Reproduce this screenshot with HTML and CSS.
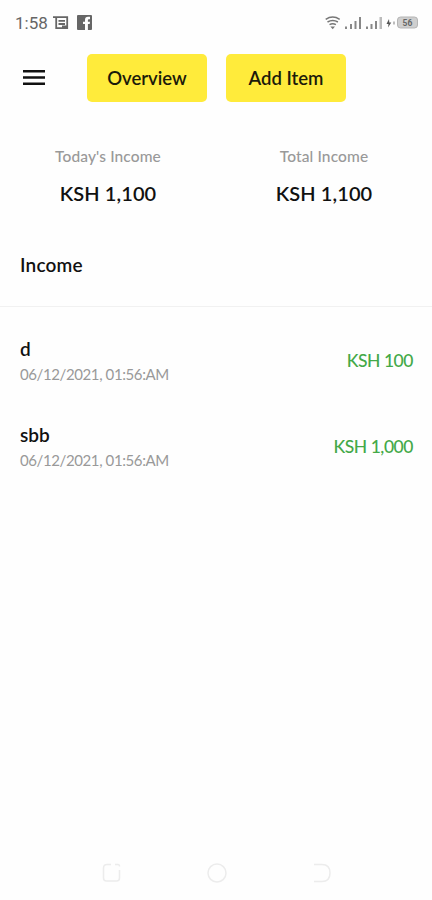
FILE: index.html
```html
<!DOCTYPE html>
<html lang="en">
<head>
<meta charset="utf-8">
<title>Income</title>
<link rel="stylesheet" href="styles.css">
</head>
<body>
<div class="status">
  <span class="clock">1:58</span>
  <svg class="note" width="16" height="14" viewBox="0 0 16 14" fill="none" stroke="#666" stroke-width="1.8"><path d="M0 1.2h14.2v11H3.2V1.2M5.5 4.8h6.5M5.5 8h6.5M9 10.3h4.5"/></svg>
  <svg class="fb" width="15" height="15" viewBox="0 0 15 15"><rect width="15" height="15" rx="1" fill="#666"/><path d="M8 15V9H6V6.700h2V5q0-3.200 3-3.200h2v2.400h-1.100q-1 0-1 .9v1.600H13L12.700 9h-1.800v6z" fill="#fff"/></svg>
  <svg class="signals" width="94" height="16" viewBox="0 0 94 16">
    <g fill="none" stroke="#777" stroke-width="1.5"><path d="M.7 4.3q7-4.6 14 0M2.5 7q5.2-3 10.4 0M4.5 9.6q3.2-1.8 6.4 0"/></g>
    <path d="M5.4 11.5h4.6l-2.3 2.7z" fill="#777"/>
    <g fill="#888"><path d="M20 11.5h2v2.5h-2zM25 9h2v5h-2zM29.500 6h2v8h-2zM34 2h2v12h-2z"/><path d="M41 11.500h2V14h-2zM45.500 9h2v5h-2z"/><path d="M50 6h2v8h-2z"/><path d="M54.500 2h2.500v12h-2.500z" fill="#bbb"/></g>
    <path d="M64 4l-2.500 5h2L63 12.500l3.300-5h-2z" fill="#555"/>
    <path d="M69 6.500v3" stroke="#999" stroke-width="1.300"/>
    <rect x="72.500" y="2" width="20" height="11" rx="3" fill="#cfcfcf" stroke="#b5b5b5"/>
    <text x="82.500" y="10.500" text-anchor="middle" class="charge">56</text>
  </svg>
</div>
<header class="bar">
  <svg class="menu" width="22" height="16" viewBox="0 0 22 16" fill="#111"><path d="M0 0h22v2.500H0zM0 6.200h22v2.500H0zM0 12.400h22v2.500H0z"/></svg>
  <button class="btn"><span class="overview">Overview</span></button>
  <button class="btn"><span class="add">Add Item</span></button>
</header>
<section class="totals">
  <div><p class="label">Today's Income</p><p class="sum">KSH 1,100</p></div>
  <div><p class="label">Total Income</p><p class="sum">KSH 1,100</p></div>
</section>
<h1 class="heading">Income</h1>
<main class="list">
  <div class="row"><div><p class="name">d</p><p class="date">06/12/2021, 01:56:AM</p></div><span class="amount">KSH 100</span></div>
  <div class="row"><div><p class="name">sbb</p><p class="date">06/12/2021, 01:56:AM</p></div><span class="amount">KSH 1,000</span></div>
</main>
<nav class="nav">
  <svg width="20" height="20" viewBox="0 0 20 20"><path d="M9 1.500H5Q1.500 1.500 1.500 5v10q0 3 3 3h10q3 0 3-3V7M13 1.500h3q1.500 0 1.500 2"/></svg>
  <svg width="20" height="20" viewBox="0 0 20 20"><circle cx="10" cy="10" r="9"/></svg>
  <svg width="20" height="20" viewBox="0 0 20 20"><path d="M2 1.500h8q8 0 8 8.500t-8 8.500H2"/></svg>
</nav>
</body>
</html>
```
FILE: styles.css
```css
* { box-sizing: border-box; }
body { margin: 0; height: 900px; background: #fefefe; color: #111; font-family: Lato, sans-serif; font-weight: 500; display: flex; flex-direction: column; overflow: hidden; }
p, h1 { margin: 0; white-space: nowrap; }
.status { height: 45px; padding: 0 13px 0 15px; display: flex; align-items: center; flex: none; }
.clock { font: 400 17px/20px Roboto, sans-serif; color: #666; width: 38px; }
.fb { margin-left: 8px; }
.signals { margin-left: auto; }
.charge { font: 700 8.500px Roboto, sans-serif; fill: #666; }
.bar { height: 65px; padding: 0 0 0 23px; display: flex; align-items: center; flex: none; }
.menu { margin-right: 42px; }
.btn { width: 120px; height: 48px; margin: 0 19px 0 0; padding: 0; border: 0; border-radius: 5px; background: #ffeb3b; color: #1b1a0a; font: 600 18.500px/24px Lato, sans-serif; }
.totals { display: grid; grid-template-columns: 1fr 1fr; text-align: center; padding-top: 36px; height: 142px; flex: none; }
.label { font-size: 15.500px; line-height: 20px; letter-spacing: 0.12px; color: #999; }
.sum { font-size: 20px; line-height: 26px; margin-top: 14px; font-weight: 600; letter-spacing: 0.1px; }
.heading { height: 55px; padding-left: 20px; font-size: 19px; line-height: 26px; letter-spacing: 0.2px; font-weight: 600; border-bottom: 1px solid #f1f1f1; flex: none; }
.list { padding: 29px 19px 0 20px; flex: 1; }
.row { height: 86px; display: flex; justify-content: space-between; align-items: flex-start; }
.name { font-size: 19px; line-height: 26px; font-weight: 600; }
.date { font-size: 15px; line-height: 20px; margin-top: 2px; color: #999; font-weight: 400; letter-spacing: -0.4px; }
.amount { margin-top: 12px; font-size: 17.500px; line-height: 26px; letter-spacing: -0.45px; font-weight: 500; color: #43a948; }
.nav { height: 54px; padding: 0 100px 0 102px; display: flex; justify-content: space-between; align-items: center; flex: none; }
.nav svg { fill: none; stroke: #ececec; stroke-width: 1.500; }
```
